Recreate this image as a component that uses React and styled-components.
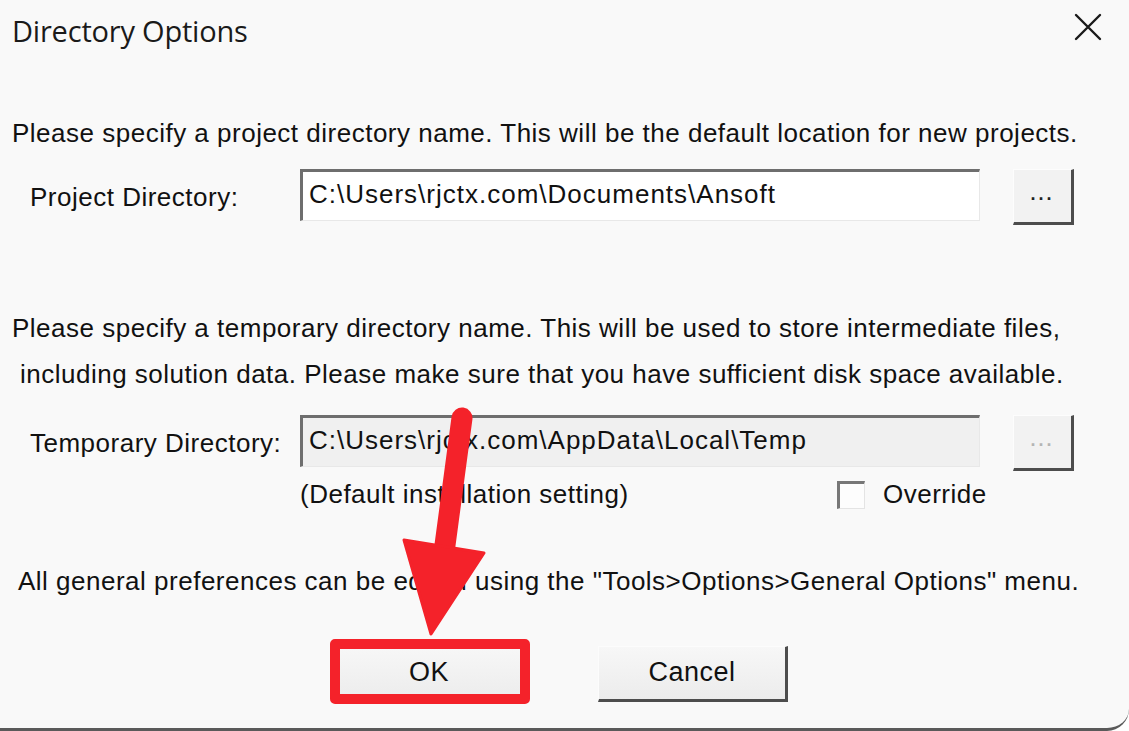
import React from 'react'
import styled, { createGlobalStyle } from 'styled-components'

const GlobalStyle = createGlobalStyle`
    html, body {
        margin: 0;
        padding: 0;
        background: #ffffff;
    }
    * {
        box-sizing: border-box;
    }
`;

const App = () => {
    return (
        <>
            <GlobalStyle />
            <Dialog>
                <TitleBar>
                    <Title>Directory Options</Title>
                    <CloseButton aria-label="Close">
                        <svg width="28" height="28" viewBox="0 0 28 28">
                            <path d="M2 2 L26 26 M26 2 L2 26" stroke="#1a1a1a" strokeWidth="2.4" strokeLinecap="round" />
                        </svg>
                    </CloseButton>
                </TitleBar>

                <Body>
                    <Text $top={61}>Please specify a project directory name. This will be the default location for new projects.</Text>

                    <FieldRow $top={22}>
                        <Label>Project Directory:</Label>
                        <PathBox>C:\Users\rjctx.com\Documents\Ansoft</PathBox>
                        <BrowseButton>...</BrowseButton>
                    </FieldRow>

                    <Text $top={89}>Please specify a temporary directory name. This will be used to store intermediate files,</Text>
                    <Text $top={18} $indent={8}>including solution data. Please make sure that you have sufficient disk space available.</Text>

                    <FieldRow $top={27}>
                        <Label>Temporary Directory:</Label>
                        <PathBox $disabled>C:\Users\rjctx.com\AppData\Local\Temp</PathBox>
                        <BrowseButton $disabled>...</BrowseButton>
                    </FieldRow>

                    <OptionRow>
                        <Note>(Default installation setting)</Note>
                        <CheckLabel>
                            <CheckBox />
                            <span>Override</span>
                        </CheckLabel>
                    </OptionRow>

                    <Text $top={56} $indent={6}>All general preferences can be edited using the "Tools&gt;Options&gt;General Options" menu.</Text>

                    <ButtonRow>
                        <DialogButton>OK</DialogButton>
                        <DialogButton>Cancel</DialogButton>
                    </ButtonRow>
                </Body>

                <Highlight />
                <Arrow width="1129" height="731" viewBox="0 0 1129 731">
                    <line x1="462" y1="418" x2="443" y2="560" stroke="#f4222a" strokeWidth="21" strokeLinecap="round" />
                    <polygon points="404,540 484,553 431,634" fill="#f4222a" strokeLinejoin="round" stroke="#f4222a" strokeWidth="3" />
                </Arrow>
            </Dialog>
        </>
    )
}

const Dialog = styled.div`
    position: relative;
    width: 1129px;
    height: 731px;
    overflow: hidden;
    background: #f9f9f9;
    border-bottom: 3px solid #5a5a5a;
    border-bottom-right-radius: 22px;
    font-family: "Liberation Sans", Arial, sans-serif;
    color: #111;
`;

const TitleBar = styled.div`
    display: flex;
    align-items: center;
    justify-content: space-between;
    height: 58px;
    padding: 0 25px 0 12px;
`;

const Title = styled.div`
    font-family: "Open Sans", "Noto Sans", sans-serif;
    font-size: 29px;
    color: #1a1a1a;
    letter-spacing: -0.2px;
    margin-top: 2px;
`;

const CloseButton = styled.div`
    display: flex;
    align-items: center;
    justify-content: center;
    width: 32px;
    height: 32px;
    margin-top: -4px;
`;

const Body = styled.div`
    display: flex;
    flex-direction: column;
    padding: 0 0 0 12px;
`;

const Text = styled.div`
    margin-top: ${p => p.$top || 0}px;
    padding-left: ${p => p.$indent || 0}px;
    font-size: 26px;
    line-height: 28px;
    letter-spacing: 0.5px;
    white-space: nowrap;
`;

const FieldRow = styled.div`
    display: flex;
    align-items: center;
    margin-top: ${p => p.$top}px;
    height: 56px;
`;

const Label = styled.div`
    width: 288px;
    padding-left: 18px;
    font-size: 26px;
    letter-spacing: 0.5px;
    white-space: nowrap;
`;

const PathBox = styled.div`
    display: flex;
    align-items: center;
    align-self: flex-start;
    width: 680px;
    height: 52px;
    padding: 0 0 4px 6px;
    background: ${p => p.$disabled ? '#f0f0f0' : '#ffffff'};
    border-top: 3px solid #6e6e6e;
    border-left: 3px solid #6e6e6e;
    border-right: 1px solid #e8e8e8;
    border-bottom: 1px solid #e8e8e8;
    font-size: 26px;
    letter-spacing: 1px;
    white-space: nowrap;
    overflow: hidden;
`;

const BrowseButton = styled.div`
    display: flex;
    align-items: center;
    justify-content: center;
    width: 61px;
    height: 56px;
    margin-left: 33px;
    padding-bottom: 4px;
    background: #f2f2f2;
    border-top: 1px solid #fdfdfd;
    border-left: 1px solid #fdfdfd;
    border-right: 3px solid #4d4d4d;
    border-bottom: 3px solid #4d4d4d;
    font-size: 18px;
    font-weight: bold;
    letter-spacing: 3px;
    color: ${p => p.$disabled ? '#b5b5b5' : '#222'};
`;

const OptionRow = styled.div`
    display: flex;
    align-items: center;
    height: 34px;
    margin-top: 6px;
    padding-left: 288px;
`;

const Note = styled.div`
    width: 537px;
    font-size: 26px;
    letter-spacing: 0.5px;
    white-space: nowrap;
`;

const CheckLabel = styled.label`
    display: flex;
    align-items: center;
    gap: 18px;
    font-size: 26px;
    letter-spacing: 0.5px;
`;

const CheckBox = styled.span`
    display: block;
    width: 28px;
    height: 28px;
    margin-top: 2px;
    background: #fdfdfd;
    border-top: 3px solid #777;
    border-left: 3px solid #777;
    border-right: 1px solid #e4e4e4;
    border-bottom: 1px solid #e4e4e4;
`;

const ButtonRow = styled.div`
    display: flex;
    gap: 73px;
    margin-top: 51px;
    padding-left: 323px;
`;

const DialogButton = styled.div`
    display: flex;
    align-items: center;
    justify-content: center;
    width: 190px;
    height: 56px;
    padding-bottom: 2px;
    background: linear-gradient(#f7f7f7, #ececec);
    border-top: 1px solid #fcfcfc;
    border-left: 1px solid #fcfcfc;
    border-right: 3px solid #4d4d4d;
    border-bottom: 3px solid #4d4d4d;
    font-size: 27px;
    letter-spacing: 0.5px;
`;

const Highlight = styled.div`
    position: absolute;
    left: 330px;
    top: 639px;
    width: 200px;
    height: 65px;
    border: 10px solid #f4222a;
    border-radius: 5px;
`;

const Arrow = styled.svg`
    position: absolute;
    left: 0;
    top: 0;
    pointer-events: none;
`;

export default App;
